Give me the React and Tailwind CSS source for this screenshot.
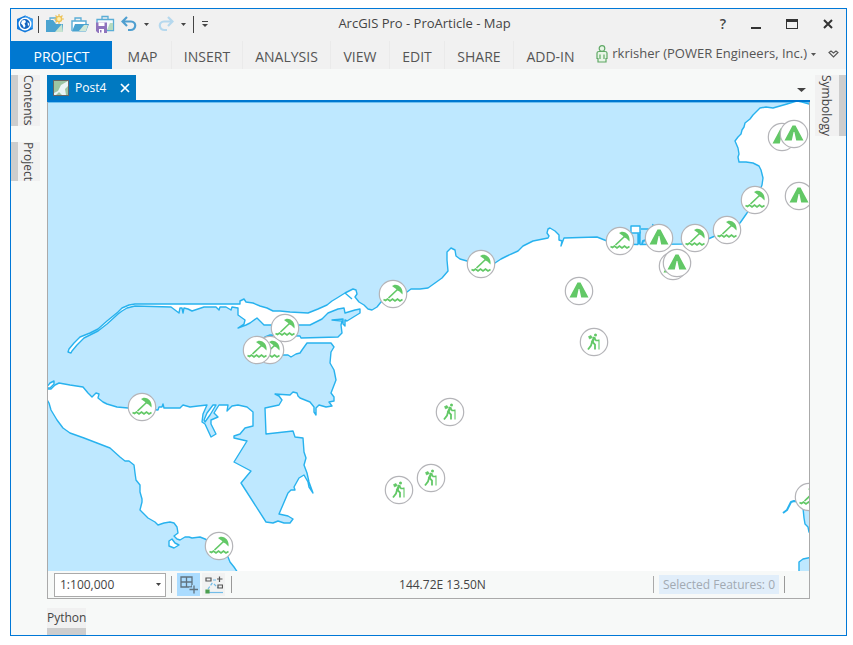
const TABS = [
  { label: "MAP", box: "w-[58px]" },
  { label: "INSERT", box: "w-[71px]" },
  { label: "ANALYSIS", box: "w-[88px]" },
  { label: "VIEW", box: "w-[59px]" },
  { label: "EDIT", box: "w-[55px]" },
  { label: "SHARE", box: "w-[69px]" },
  { label: "ADD-IN", box: "w-[73px]" },
];

const MARKERS = [
  ["beach", 142, 407],
  ["beach", 270, 350],
  ["beach", 257, 350],
  ["beach", 285, 328],
  ["beach", 393, 294],
  ["beach", 481, 264],
  ["beach", 620, 241],
  ["beach", 695, 238],
  ["beach", 727, 230],
  ["beach", 755, 200],
  ["beach", 219, 546],
  ["beach", 809, 497],
  ["tent", 782, 137],
  ["tent", 794, 134],
  ["tent", 799, 196],
  ["tent", 659, 238],
  ["tent", 673, 266],
  ["tent", 677, 263],
  ["tent", 579, 291],
  ["hiker", 594, 342],
  ["hiker", 450, 412],
  ["hiker", 431, 478],
  ["hiker", 399, 490],
];

const LAND = `M68 352 L69 349 L74 343 L80 337 L90 333 L98 329 L107 321 L118 312 L122 308 L129 305 L135 304 L240 304
 L240 301 L244 299 L246 302 L253 303 L260 306 L267 308 L273 311 L280 311 L290 312 L308 313 L318 309 L327 305 L332 301 L337 298 L345 293
 L353 289 L356 290 L357 294 L355 297 L359 302 L364 305 L368 309 L372 310 L377 307 L381 302 L393 297 L407 292 L411 289 L420 289 L428 288
 L435 283 L442 278 L448 271 L447 260 L447 252 L451 248 L455 250 L456 256 L460 259 L467 261 L481 265 L495 263 L501 259 L507 256
 L518 251 L523 246 L533 241 L548 238 L549 236 L547 233 L548 229 L550 228 L555 231 L559 235 L559 240 L562 241 L561 246 L564 238 L580 237.5
 L597 237 L607 241 L620 244 L638 244.500 L638 232 L640 232 L640 244.500 L682 244 L708 239 L715 236 L727 232 L740 223 L747 213 L755 200
 L760 190 L762 185 L763 178 L761 170 L759 166 L753 163 L746 162 L739 162 L738 157 L739 154 L738 148 L735 141 L738 137 L741 134 L742 130
 L744 127 L745 123 L750 119 L753 115 L757 111 L760 108 L766 107 L773 108 L780 106 L787 104 L797 101 L802 102 L812 105
 L812 573 L238 573 L234 567 L230 562 L228 557 L219 546 L205 539 L200 537 L192 538 L189 537 L185 537 L180 540 L177 539 L174 536
 L178 533 L177 527 L174 523 L170 522 L164 523 L158 525 L155 522 L148 518 L143 513 L140 510 L142 502 L142 499 L140 492 L140 485
 L136 480 L135 473 L134 465 L129 461 L125 461 L120 457 L110 448 L97 443 L84 438 L70 433 L63 428 L57 420 L51 410 L49 403 L46 398
 L46 389 L51 389 L55 385 L59 383 L70 385 L83 387 L88 393 L92 397 L96 393 L99 394 L98 398 L103 402 L107 404 L117 407 L128 408
 L142 409 L158 410 L159 407 L162 407 L163 404 L164 408 L180 408 L183 405 L190 407 L198 406 L207 405 L203 414 L202 422 L205 424 L211 437
 L216 434 L211 424 L211 420 L218 417 L214 413 L219 405 L228 405 L227 411 L232 406 L238 405 L247 407 L253 412 L253 426 L245 428
 L240 434 L234 436 L234 438 L247 441 L234 462 L251 471 L241 483 L266 522 L273 523 L278 521 L284 523 L290 523 L293 519 L288 516 L279 514
 L288 493 L291 490 L295 490 L294 487 L299 478 L304 475 L308 482 L309 487 L313 493 L309 482 L307 473 L304 465 L306 458 L304 452
 L303 438 L295 437 L293 431 L266 434 L265 408 L279 405 L282 400 L279 396 L275 394 L290 395 L293 392 L297 393 L298 396 L300 398
 L310 402 L314 407 L314 412 L316 415 L316 408 L319 405 L326 407 L332 406 L329 402 L334 401 L334 397 L331 393 L336 380 L334 370
 L330 363 L331 352 L334 347 L331 343 L318 343 L307 343 L302 350 L300 353 L296 354 L291 357 L288 355 L270 355 L256 346 L265 337
 L270 335 L300 336 L301 338 L338 337 L342 333 L341 325 L342 321 L332 320 L343 319 L343 324 L345 326 L345 320 L347 321
 L360 313 L360 309 L355 310 L345 313 L344 308 L338 309 L328 313 L322 319 L310 325 L296 325 L264 325 L257 318 L250 323 L246 325
 L238 328 L244 324 L245 320 L238 315 L238 308 L232 307 L231 310 L226 307 L220 307 L219 310 L216 307 L204 307 L198 309 L192 311
 L188 309 L184 308 L183 313 L182 308 L180 308 L179 313 L171 307 L135 306 L127 308 L122 311 L118 314 L107 324 L98 331 L84 338
 L77 345 L72 351 L71 353 Z`;

function BeachGlyph() {
  return (
    <g>
      <path d="M-1 -8 L1.500 -9.300 C6 -10 10.500 -5.500 9.500 0.500 L8.500 -0.500 L6.500 -2.500 L4.500 -3.500 L2.500 -5.500 L1 -6.500 Z" fill="#62c866" />
      <path d="M4.500 -4.500 L-4.500 4" stroke="#62c866" strokeWidth="1.700" fill="none" />
      <path
        d="M-9.500 5.500 L-7.500 6.500 L-5.500 5 L-3 7 L-0.500 5 L2 7 L4.500 5 L7 7 L9.500 5.500"
        stroke="#62c866"
        strokeWidth="1.700"
        fill="none"
      />
    </g>
  );
}

function TentGlyph() {
  return (
    <path
      d="M-1.500 -8.500 L1.500 -8.500 L9.500 6.500 L2.200 6.500 L0.400 -2 L-0.400 -2 L-2.200 6.500 L-9.500 6.500 Z"
      fill="#62c866"
    />
  );
}

function HikerGlyph() {
  return (
    <g fill="none" stroke="#62c866" strokeWidth="1.800">
      <circle cx="1.500" cy="-7" r="1.500" fill="#62c866" stroke="none" />
      <path d="M0.500 -5 L-2 0.500" strokeWidth="2.600" />
      <path d="M-5.500 -5.500 L-3 -6.500 L-1.500 -4.500 L-4.500 -3 Z" fill="#62c866" strokeWidth="0.600" />
      <path d="M-1.500 0 L1 2.500 L1 7.500 M-2 0 L-3 3.500 L-6 7.500" />
      <path d="M0.500 -4 L2 -1.500 L5 -1.500" strokeWidth="1.500" />
      <path d="M5 -2.500 L5 7.500" strokeWidth="1.100" />
    </g>
  );
}

function MapView() {
  return (
    <svg
      className="block min-h-0 w-full flex-1 bg-[#bee8ff]"
      viewBox="48 102 761 469"
      preserveAspectRatio="xMidYMid slice"
      role="img"
      aria-label="Map"
    >
      <rect x="48" y="102" width="761" height="1" fill="#70c0f0" />
      <g stroke="#28b2ee" strokeWidth="1.400" strokeLinejoin="round" fill="#fff">
        <path d={LAND} />
        <path d="M169 541 L172 539 L175 543 L179 545 L174 548 L169 546 Z" />
        <path d="M46 388 L50 383 L54 381 L54 384 L50 388 Z" />
        <path d="M204 420 L207 413 L213 405 L216 405 L210 415 L205 422 Z" />
        <path d="M345 293 L352 299" fill="none" />
        <path d="M631 226 L640 226 L640 233 L631 233 Z" />
        <path d="M641 229 L652 229 L653 224" fill="none" />
        <path d="M642 244 L643 241 L646 240 M639 234 L639 244" fill="none" strokeWidth="2" />
        <path d="M783 513 L787 510 L789 506 L791 502 L794 501 L799 502" fill="none" strokeWidth="2" />
        <path d="M803 508 L804 518 L805 524 L808 527 L809 532 L812 532 L812 505 Z" fill="#bee8ff" />
        <path d="M799 573 L799 562 L803 559 L812 557 L812 573 Z" fill="#bee8ff" />
      </g>
      {MARKERS.map(([kind, x, y]) => (
        <g key={`${x}-${y}`} transform={`translate(${x} ${y})`}>
          <circle r="13.700" fill="#fff" stroke="#b4b4b8" strokeWidth="1.200" />
          {kind === "beach" && <BeachGlyph />}
          {kind === "tent" && <TentGlyph />}
          {kind === "hiker" && <HikerGlyph />}
        </g>
      ))}
    </svg>
  );
}

function Caret({ className }) {
  return (
    <svg className={className} viewBox="0 0 10 5" preserveAspectRatio="none" aria-hidden="true">
      <path d="M0 0 H10 L5 5 Z" fill="currentColor" />
    </svg>
  );
}

function AppLogo() {
  return (
    <svg className="size-[18px]" viewBox="0 0 18 18" aria-hidden="true">
      <path d="M9 0.500 L17 4 V14 L9 17.500 L1 14 V4 Z" fill="#1179dc" />
      <path d="M9 0.500 L17 4 V14 L9 9 Z" fill="#3c9df0" />
      <circle cx="9" cy="9" r="5.700" fill="#1565c0" stroke="#fff" strokeWidth="1.500" />
      <path d="M6 5.500 L9 5 L10 7 L8.500 8.500 L9.500 11 L8 13 L6.500 10 L5 8.500 Z M11.500 7 L13.500 9 L12 11.500 Z" fill="#fff" />
    </svg>
  );
}

function Briefcase({ badge }) {
  const open = badge === "open";
  return (
    <svg className="h-[20px] w-[20px]" viewBox="0 0 20 20" aria-hidden="true">
      {badge !== "save" && <path d="M5 7 V4 H11 V7" fill="none" stroke="#5aadd6" strokeWidth="1.300" />}
      {badge === "new" && (
        <>
          <path d="M1 6 H8 L11 10 H18 V18 H1 Z" fill="#4aa3d0" />
          <path d="M10 18 L17 10 L18 18 Z" fill="#c9e4d0" />
          <circle cx="14" cy="5" r="2.600" fill="#fff0b0" stroke="#edc35a" strokeWidth="1.400" />
          <path d="M14 0 V2 M14 8 V10 M9 5 H11 M17 5 H19 M10.500 1.500 L12 3 M17.500 1.500 L16 3 M10.500 8.500 L12 7" stroke="#edc35a" strokeWidth="1.200" />
        </>
      )}
      {open && (
        <>
          <path d="M2 17 V7 H16 V10" fill="#fff" stroke="#5aadd6" strokeWidth="1.400" />
          <path d="M2 17.500 L5 10 H19 L16 17.500 Z" fill="#4aa3d0" />
          <path d="M9 17 L14 11 L18 11 L16 17 Z" fill="#cfe8d8" />
        </>
      )}
      {badge === "save" && (
        <>
          <path d="M7 5 V2.500 H13 V5" fill="none" stroke="#5aadd6" strokeWidth="1.300" />
          <path d="M2 9 V5.500 H18.500 V16.500 H12" fill="#f4fafc" stroke="#5aadd6" strokeWidth="1.300" />
          <path d="M12 16 L15 9 L18 9 V16 Z" fill="#b5dac0" />
          <path d="M1 8.500 H12 V19 H3 L1 17 Z" fill="#8f74bd" />
          <path d="M3.500 8.500 H9.500 V12 H3.500 Z" fill="#fff" />
          <path d="M4 15 H9 V19 H4 Z" fill="#fff" />
          <path d="M5 16 H6.500 V18.500 H5 Z" fill="#8f74bd" />
        </>
      )}
    </svg>
  );
}

function UndoIcon({ className }) {
  return (
    <svg className={className} viewBox="0 0 16 16" aria-hidden="true">
      <path d="M6 1 L1.500 5.500 L6 10 M2 5.500 H10 C16 5.500 15.500 14.500 9 14 H7" fill="none" stroke="currentColor" strokeWidth="2.200" />
    </svg>
  );
}

function TitleBar() {
  return (
    <header className="flex h-8 shrink-0 items-center px-[5px] pb-[2px] text-[#444]">
      <div className="flex flex-1 items-center">
        <AppLogo />
        <span className="ml-[4px] mr-[6px] h-[17px] w-px bg-[#444]" />
        <div className="flex items-center gap-[5px]">
          <button aria-label="New project"><Briefcase badge="new" /></button>
          <button aria-label="Open project"><Briefcase badge="open" /></button>
          <button aria-label="Save project"><Briefcase badge="save" /></button>
        </div>
        <button aria-label="Undo" className="ml-[6px] text-[#4f9fd0]"><UndoIcon className="size-4" /></button>
        <button aria-label="Undo history" className="ml-[7px]"><Caret className="h-[3px] w-[5px]" /></button>
        <button aria-label="Redo" className="ml-[9px] text-[#b5d8ee]"><UndoIcon className="size-4 -scale-x-100" /></button>
        <button aria-label="Redo history" className="ml-[7px]"><Caret className="h-[3px] w-[5px]" /></button>
        <span className="ml-[7px] mr-[8px] h-[17px] w-px bg-[#444]" />
        <button aria-label="Customize toolbar" className="flex flex-col items-center gap-[2px]">
          <span className="h-px w-[6px] bg-[#444]" />
          <Caret className="h-[3px] w-[6px]" />
        </button>
      </div>
      <h1 className="text-[13px]">ArcGIS Pro - ProArticle - Map</h1>
      <div className="flex flex-1 items-center justify-end gap-[25px] pr-[8px]">
        <button aria-label="Help" className="text-[14px] leading-4 font-semibold">?</button>
        <button aria-label="Minimize" className="flex h-[10px] w-[10px] items-end"><span className="h-[2px] w-full bg-[#333]" /></button>
        <button aria-label="Maximize" className="h-[10px] w-[12px] border border-t-[3px] border-[#333]" />
        <button aria-label="Close">
          <svg className="size-[10px]" viewBox="0 0 10 10" aria-hidden="true">
            <path d="M1 1 L9 9 M9 1 L1 9" stroke="#333" strokeWidth="2" />
          </svg>
        </button>
      </div>
    </header>
  );
}

function Ribbon() {
  return (
    <nav className="flex h-7 shrink-0 items-stretch text-[14px] text-[#555]">
      <button className="mr-[2px] w-[101px] shrink-0 bg-[#0078d0] pt-[3px] text-white">PROJECT</button>
      {TABS.map((tab) => (
        <button key={tab.label} className={`${tab.box} shrink-0 border-r border-[#eaeaea] pt-[3px] last-of-type:border-r-0`}>
          {tab.label}
        </button>
      ))}
      <div className="flex flex-1 items-center justify-end pr-[7px] pb-[2px] text-[13px] whitespace-nowrap">
        <svg className="mr-[4px] h-[18px] w-[12px] shrink-0" viewBox="0 0 12 18" fill="#e8f5e6" stroke="#5fa865" strokeWidth="1.200" aria-hidden="true">
          <path d="M1 8 Q1 6.500 3 6.500 H9 Q11 6.500 11 8 V13.500 H10 V17 H2 V13.500 H1 Z M4 9.500 V14 M8 9.500 V14" />
          <circle cx="6" cy="3.500" r="2.800" />
        </svg>
        <button className="flex items-center gap-[4px]">
          rkrisher (POWER Engineers, Inc.)
          <Caret className="h-[3px] w-[5px]" />
        </button>
        <button aria-label="Collapse ribbon" className="ml-[12px]">
          <svg className="h-[8px] w-[11px]" viewBox="0 0 11 8" fill="none" stroke="#555" strokeWidth="1.100" aria-hidden="true">
            <path d="M1 2.500 L3 1 L5.500 3 L8 1 L10 2.500 L5.500 7 Z" />
          </svg>
        </button>
      </div>
    </nav>
  );
}

function LeftTab({ label }) {
  return (
    <button className="flex border-l-[7px] border-[#cdcdcd] bg-[#f1f1f1] py-px pr-[4px] pl-[2px] text-[12px] leading-4 [writing-mode:vertical-rl]">
      {label}
    </button>
  );
}

function StatusBar() {
  return (
    <footer className="flex h-[27px] shrink-0 items-center justify-between pl-[6px] pr-[24px] text-[12px]">
      <div className="flex items-center">
        <div className="relative">
          <select aria-label="Map scale" className="block h-[24px] w-[112px] appearance-none border border-[#aaa] bg-white pl-[5px] text-[12px]">
            <option>1:100,000</option>
          </select>
          <Caret className="pointer-events-none absolute top-[10px] right-[5px] h-[3px] w-[5px]" />
        </div>
        <span className="mx-[5px] h-[17px] w-px bg-[#999]" />
        <button aria-label="Constraints" className="flex h-[23px] w-[23px] items-center justify-center bg-[#abdcff]">
          <svg className="size-[18px]" viewBox="0 0 18 18" fill="none" stroke="#60727f" strokeWidth="1.300" aria-hidden="true">
            <path d="M1 1 H12 V11 H1 Z M6.500 1 V11 M1 6 H12" />
            <path d="M14 9 V18 M9 13.500 H18" stroke="#abdcff" strokeWidth="4" />
            <path d="M14 9.500 V17.500 M9.500 13.500 H18" />
          </svg>
        </button>
        <button aria-label="Snapping" className="ml-[2px] flex h-[23px] w-[23px] items-center justify-center bg-[#f1f2f2]">
          <svg className="size-[18px]" viewBox="0 0 18 18" fill="none" stroke="#555" strokeWidth="1.200" aria-hidden="true">
            <path d="M4 16.500 H18" stroke="#72bce8" />
            <path d="M3 13 L8 6 M8 4 H11 M9 8 L13 12" stroke="#72bce8" strokeDasharray="3 1.500" />
            <path d="M1 2 H6 V5 H1 Z M13 9 H17.500 V12 H13 Z M14.500 0.500 V6 M12 3 H17.500" />
            <path d="M1 14 H4 V17 H1 Z" fill="#4c9f50" stroke="#4c9f50" />
          </svg>
        </button>
        <span className="ml-[6px] h-[17px] w-px bg-[#999]" />
      </div>
      <output>144.72E 13.50N</output>
      <div className="flex items-center">
        <span className="mr-[5px] h-[17px] w-px bg-[#aaa]" />
        <span className="bg-[#e1eefa] px-[4px] leading-[19px] whitespace-nowrap text-[#a2aab2]">Selected Features: 0</span>
        <span className="ml-[5px] h-[17px] w-px bg-[#999]" />
      </div>
    </footer>
  );
}

export default function App() {
  return (
    <div className="h-screen bg-white pt-[8px] pr-[6px] pb-[9px] pl-[10px] font-['Open_Sans','Noto_Sans',sans-serif] text-[#444]">
      <div className="flex h-full flex-col border border-[#0078d7] bg-[#f7f9f8]">
        <div className="flex shrink-0 flex-col bg-[#f1f1f1]">
          <TitleBar />
          <Ribbon />
        </div>
        <div className="flex min-h-0 flex-1 pt-[6px]">
          <aside className="flex w-9 shrink-0 flex-col items-start gap-[16px]">
            <LeftTab label="Contents" />
            <LeftTab label="Project" />
          </aside>
          <main className="flex min-w-0 flex-1 flex-col">
            <div className="flex h-[27px] shrink-0 items-stretch justify-between border-b-2 border-[#0078d0]">
              <div className="flex w-[89px] items-center bg-[#0079c1] pl-[6px] text-[12px] text-white">
                <svg className="mr-[6px] size-4" viewBox="0 0 16 16" aria-hidden="true">
                  <rect x="0.500" y="0.500" width="15" height="15" fill="#9cc5a2" stroke="#666" />
                  <path d="M1 13 L5 11 L8 5 L15 1 V6 L12 9 L13 15 H9 L6 12 L3 15 H1 Z" fill="#eaf5f5" />
                </svg>
                Post4
                <button aria-label="Close Post4" className="ml-auto mr-[6px]">
                  <svg className="size-[10px]" viewBox="0 0 10 10" aria-hidden="true">
                    <path d="M1 1 L9 9 M9 1 L1 9" stroke="#fff" strokeWidth="1.700" />
                  </svg>
                </button>
              </div>
              <button aria-label="View list" className="mr-[4px] pt-[4px]"><Caret className="h-[4px] w-[9px]" /></button>
            </div>
            <div className="flex min-h-0 flex-1 flex-col border border-t-0 border-[#aaa]">
              <MapView />
              <StatusBar />
            </div>
          </main>
          <aside className="flex w-9 shrink-0 flex-col items-end">
            <button className="border-r-[7px] border-[#cdcdcd] bg-[#f1f1f1] py-px pr-[5px] pl-[3px] text-[12px] leading-4 [writing-mode:vertical-rl]">
              Symbology
            </button>
          </aside>
        </div>
        <div className="flex shrink-0 pt-[9px] pl-9">
          <button className="border-b-[7px] border-[#cdcdcd] bg-[#f1f1f1] text-[12px] leading-5">Python</button>
        </div>
      </div>
    </div>
  );
}
